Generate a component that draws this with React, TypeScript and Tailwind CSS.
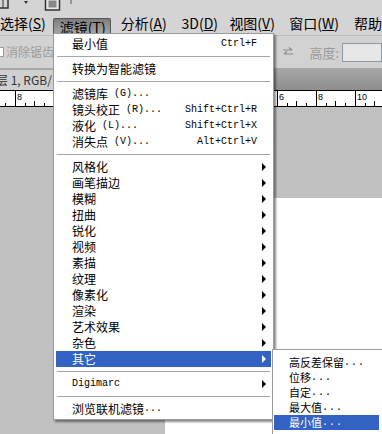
import React from 'react';

const cjk = "font-['Noto_Sans_CJK_SC',sans-serif]";
const mono = "font-['Liberation_Mono',monospace] text-[10px]";

type Item =
  | { sep: true }
  | { label?: string; suffix?: string; code?: string; shortcut?: string; arrow?: boolean; active?: boolean; sep?: false };

const items: Item[] = [
  { label: '最小值', shortcut: 'Ctrl+F' },
  { sep: true },
  { label: '转换为智能滤镜' },
  { sep: true },
  { label: '滤镜库', suffix: ' (G)...' },
  { label: '镜头校正', suffix: ' (R)...', shortcut: 'Shift+Ctrl+R' },
  { label: '液化', suffix: ' (L)...', shortcut: 'Shift+Ctrl+X' },
  { label: '消失点', suffix: ' (V)...', shortcut: 'Alt+Ctrl+V' },
  { sep: true },
  { label: '风格化', arrow: true },
  { label: '画笔描边', arrow: true },
  { label: '模糊', arrow: true },
  { label: '扭曲', arrow: true },
  { label: '锐化', arrow: true },
  { label: '视频', arrow: true },
  { label: '素描', arrow: true },
  { label: '纹理', arrow: true },
  { label: '像素化', arrow: true },
  { label: '渲染', arrow: true },
  { label: '艺术效果', arrow: true },
  { label: '杂色', arrow: true },
  { label: '其它', arrow: true, active: true },
  { sep: true },
  { code: 'Digimarc', arrow: true },
  { sep: true },
  { label: '浏览联机滤镜', suffix: '...' },
];

const subItems = [
  { label: '高反差保留', active: false },
  { label: '位移', active: false },
  { label: '自定', active: false },
  { label: '最大值', active: false },
  { label: '最小值', active: true },
];

function Arrow({ white }: { white?: boolean }) {
  return (
    <span
      className={
        white
          ? 'absolute right-[5px] top-[4px] h-0 w-0 border-y-[4px] border-l-[4px] border-y-transparent border-l-white'
          : 'absolute right-[5px] top-[4px] h-0 w-0 border-y-[4px] border-l-[4px] border-y-transparent border-l-black'
      }
    />
  );
}

function Ruler() {
  const minor = [5, 25, 44, 287, 306, 326, 345, 365];
  const mid = [34, 296, 335, 374];
  const major = [15, 277, 316, 355];
  return (
    <svg width="382" height="17" className="block">
      <rect x="0" y="0" width="382" height="17" fill="#fff" />
      <line x1="0" y1="0.5" x2="382" y2="0.5" stroke="#000" />
      <line x1="0" y1="16.5" x2="382" y2="16.5" stroke="#000" />
      {minor.map((x) => (
        <line key={x} x1={x + 0.5} y1="13" x2={x + 0.5} y2="16" stroke="#000" />
      ))}
      {mid.map((x) => (
        <line key={x} x1={x + 0.5} y1="11" x2={x + 0.5} y2="16" stroke="#000" />
      ))}
      {major.map((x) => (
        <line key={x} x1={x + 0.5} y1="1" x2={x + 0.5} y2="16" stroke="#000" />
      ))}
      <text x="17" y="10" fontSize="9" fontFamily="Liberation Sans, sans-serif" fill="#000">8</text>
      <text x="279" y="10" fontSize="9" fontFamily="Liberation Sans, sans-serif" fill="#000">6</text>
      <text x="318" y="10" fontSize="9" fontFamily="Liberation Sans, sans-serif" fill="#000">8</text>
      <text x="357" y="10" fontSize="9" fontFamily="Liberation Sans, sans-serif" fill="#000">10</text>
    </svg>
  );
}

export default function App() {
  return (
    <div className={`relative flex h-[434px] w-[382px] flex-col overflow-hidden bg-[#c0c0c0] ${cjk}`}>
      {/* top toolbar strip */}
      <div className="flex h-[11px] items-start bg-[#d4d4d4]">
        <svg width="80" height="11" className="block">
          <rect x="-2" y="-3" width="10" height="11" fill="none" stroke="#333" strokeWidth="1.5" />
          <line x1="3" y1="-3" x2="3" y2="8" stroke="#333" />
          <path d="M24 1 L28 1 L26 4 Z" fill="#333" />
          <rect x="45.5" y="-2" width="14" height="12" fill="#e8e8e8" stroke="#333" strokeWidth="1.5" />
          <rect x="48.5" y="0.5" width="8" height="7" fill="#888" />
          <path d="M71 0 L71 4" stroke="#555" />
        </svg>
      </div>

      {/* menu bar */}
      <div className="flex h-[24px] items-center bg-[#d4d4d4] text-[14px] leading-none text-black">
        <div className="w-[53px]">
          选择(<span className="underline">S</span>)
        </div>
        <div className="flex h-[17px] w-[58px] items-center self-end rounded-t-[2px] border border-b-0 border-[#555] bg-gradient-to-b from-[#7e7e7e] to-[#a9a9a9] pl-[6px]">
          滤镜(<span className="underline">T</span>)
        </div>
        <div className="ml-[10px] w-[61px]">
          分析(<span className="underline">A</span>)
        </div>
        <div className="w-[48px]">
          3D(<span className="underline">D</span>)
        </div>
        <div className="w-[60px]">
          视图(<span className="underline">V</span>)
        </div>
        <div className="w-[65px]">
          窗口(<span className="underline">W</span>)
        </div>
        <div className="whitespace-nowrap">帮助</div>
      </div>

      {/* options bar */}
      <div className="flex h-[33px] items-center border-t border-[#bdbdbd] bg-[#d2d2d2] text-[12px] leading-none">
        <span className="-ml-[6px] h-[10px] w-[10px] border border-[#9a9a9a] bg-white" />
        <span className="ml-[2px] text-[#9c9c9c]">消除锯齿</span>
        <div className="ml-auto flex items-center">
          <svg width="12" height="10" className="mr-[15px] block">
            <path d="M1 3 H10 M7 0.5 L10 3 M11 7 H2 M5 4.5 L2 7" stroke="#8a8a8a" strokeWidth="1.2" fill="none" />
          </svg>
          <span className="mr-[3px] text-[13px] text-[#9a9a9a]">高度:</span>
          <span className="h-[19px] w-[40px] border border-[#8d9aa6] bg-[#e6e6e6]" />
        </div>
      </div>

      {/* document tab bar */}
      <div className="flex h-[22px] items-end bg-gradient-to-b from-[#a8a8a8] to-[#8e8e8e]">
        <div className="flex h-[20px] w-[60px] items-center bg-[#d0d0d0] text-[12px] leading-none text-[#333] whitespace-nowrap">
          <span className="-ml-[4px]">层 1, RGB/</span>
        </div>
      </div>

      <Ruler />

      {/* workspace with canvas */}
      <div className="flex flex-1 pl-[165px] pt-[91px]">
        <div className="flex-1 bg-white" />
      </div>

      {/* filter dropdown */}
      <div className="absolute left-[53px] top-[33px] w-[221px] border border-[#9a9a9a] bg-white pb-[2px] pt-[2px] text-[12px] leading-none text-black shadow-[2px_2px_2px_rgba(0,0,0,0.45)]">
        {items.map((it, i) =>
          it.sep ? (
            <div key={i} className="flex h-[9px] items-center px-[3px]">
              <div className="h-px w-full bg-[#a6a6a6]" />
            </div>
          ) : (
            <div
              key={i}
              className={
                it.active
                  ? 'relative mx-[2px] flex h-[16px] items-center bg-[#3162c4] pl-[16px] pr-[14px] text-white'
                  : 'relative mx-[2px] flex h-[16px] items-center pl-[16px] pr-[14px]'
              }
            >
              {it.label && <span>{it.label}</span>}
              {it.code && <span className={mono}>{it.code}</span>}
              {it.suffix && <span className={`${mono} whitespace-pre`}>{it.suffix}</span>}
              {it.shortcut && <span className={`${mono} ml-auto`}>{it.shortcut}</span>}
              {it.arrow && <Arrow white={it.active} />}
            </div>
          )
        )}
      </div>

      {/* "其它" submenu */}
      <div className="absolute left-[272px] top-[349px] h-[100px] w-[120px] border border-[#9a9a9a] bg-white pt-[5px] text-[11px] leading-none text-black shadow-[2px_2px_2px_rgba(0,0,0,0.35)]">
        {subItems.map((s) => (
          <div
            key={s.label}
            className={
              s.active
                ? 'ml-[1px] flex h-[15px] w-[105px] items-center bg-[#3162c4] pl-[15px] text-white'
                : 'ml-[1px] flex h-[15px] w-[105px] items-center pl-[15px]'
            }
          >
            <span>{s.label}</span>
            <span className={`${mono} tracking-[1px]`}>...</span>
          </div>
        ))}
      </div>
    </div>
  );
}
